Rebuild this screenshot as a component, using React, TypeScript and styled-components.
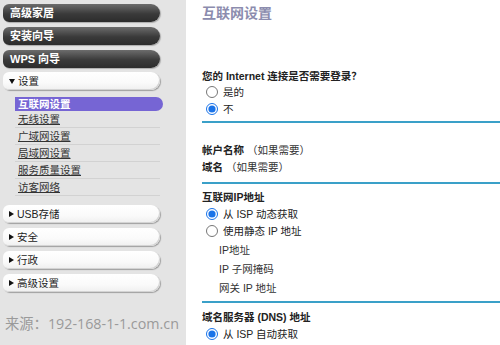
import React from "react";
import styled, { createGlobalStyle } from "styled-components";

const Global = createGlobalStyle`
  html, body { margin: 0; padding: 0; }
  body { width: 500px; height: 345px; overflow: hidden; background: #fff;
    font-family: "Liberation Sans", "Noto Sans CJK SC", sans-serif; }
`;

const Page = styled.div`
  display: flex;
  width: 500px;
  height: 345px;
  overflow: hidden;
`;

const Sidebar = styled.div`
  width: 186px;
  flex: none;
  background: #e4e4e4;
  padding: 4px 26px 0 3px;
  box-sizing: border-box;
  display: flex;
  flex-direction: column;
`;

const DarkBtn = styled.div`
  height: 18px;
  margin-bottom: 5px;
  border-radius: 6px 9px 9px 6px;
  background: linear-gradient(#6c6c6c, #3a3a3a 55%, #2c2c2c);
  box-shadow: 1px 1px 1px rgba(0,0,0,0.25);
  color: #fff;
  font-weight: bold;
  font-size: 11px;
  line-height: 18px;
  padding-left: 7px;
`;

const LightBtn = styled.div<{ $mt?: number }>`
  height: 18px;
  margin-top: ${(p) => p.$mt ?? 0}px;
  margin-bottom: 5px;
  border-radius: 6px 9px 9px 6px;
  background: linear-gradient(#ffffff, #fafafa 60%, #efefef);
  box-shadow: 1px 1px 1px rgba(0,0,0,0.3), inset -1px -1px 0 #d4d4d4;
  color: #222;
  font-size: 10.5px;
  line-height: 18px;
  padding-left: 6px;
  display: flex;
  align-items: center;
  gap: 3px;
`;

const Tri = styled.span<{ $down?: boolean }>`
  display: inline-block;
  width: 0;
  height: 0;
  ${(p) =>
    p.$down
      ? `border-left: 3px solid transparent; border-right: 3px solid transparent; border-top: 5px solid #111;`
      : `border-top: 3px solid transparent; border-bottom: 3px solid transparent; border-left: 5px solid #111;`}
`;

const SubList = styled.div`
  margin: 2px 0 9px 12px;
  display: flex;
  flex-direction: column;
`;

const Selected = styled.div`
  height: 14px;
  background: #7665d4;
  border-radius: 0 7px 7px 0;
  color: #fff;
  font-weight: bold;
  font-size: 10.5px;
  line-height: 14px;
  padding-left: 3px;
  margin-right: -3px;
`;

const SubItem = styled.div`
  height: 16px;
  border-bottom: 1px solid #d2d2d2;
  font-size: 10.5px;
  line-height: 17px;
  padding-left: 3px;
  color: #333;
  text-decoration: underline;
`;

const Footer = styled.div`
  margin-top: 15px;
  margin-left: 2px;
  font-family: "Open Sans", "Noto Sans CJK SC", sans-serif;
  font-size: 14.3px;
  color: #9a9a9a;
  white-space: nowrap;
`;

const Main = styled.div`
  flex: 1;
  padding: 2px 0 0 16px;
  font-size: 10.5px;
  color: #222;
`;

const Title = styled.div`
  font-size: 14px;
  font-weight: bold;
  color: #8c8cae;
  height: 20px;
  margin-bottom: 47px;
`;

const Question = styled.div`
  font-weight: bold;
  height: 14px;
  line-height: 14px;
`;

const RadioRow = styled.label`
  display: flex;
  align-items: center;
  height: 17px;
  padding-left: 4px;
  gap: 5px;
`;

const Radio = styled.input.attrs({ type: "radio" })`
  margin: 0;
  width: 12px;
  height: 12px;
  accent-color: #1a73e8;
`;

const Rule = styled.div<{ $mt: number; $mb: number }>`
  height: 2px;
  background: #3aa0c8;
  margin-top: ${(p) => p.$mt}px;
  margin-bottom: ${(p) => p.$mb}px;
`;

const Field = styled.div<{ $indent?: number; $h?: number; $mt?: number }>`
  height: ${(p) => p.$h ?? 17}px;
  line-height: ${(p) => p.$h ?? 17}px;
  padding-left: ${(p) => p.$indent ?? 0}px;
  margin-top: ${(p) => p.$mt ?? 0}px;
  color: #333;
`;

const Strong = styled.span`
  font-weight: bold;
  color: #222;
`;

const Bold = styled.div`
  font-weight: bold;
  height: 16px;
  line-height: 16px;
`;

export default function App() {
  return (
    <Page>
      <Global />
      <Sidebar>
        <DarkBtn>高级家居</DarkBtn>
        <DarkBtn>安装向导</DarkBtn>
        <DarkBtn>WPS 向导</DarkBtn>
        <LightBtn $mt={-1}>
          <Tri $down />
          设置
        </LightBtn>
        <SubList>
          <Selected>互联网设置</Selected>
          <SubItem>无线设置</SubItem>
          <SubItem>广域网设置</SubItem>
          <SubItem>局域网设置</SubItem>
          <SubItem>服务质量设置</SubItem>
          <SubItem>访客网络</SubItem>
        </SubList>
        <LightBtn>
          <Tri />
          USB存储
        </LightBtn>
        <LightBtn>
          <Tri />
          安全
        </LightBtn>
        <LightBtn>
          <Tri />
          行政
        </LightBtn>
        <LightBtn>
          <Tri />
          高级设置
        </LightBtn>
        <Footer>来源：192-168-1-1.com.cn</Footer>
      </Sidebar>
      <Main>
        <Title>互联网设置</Title>
        <Question>您的 Internet 连接是否需要登录？</Question>
        <RadioRow>
          <Radio name="login" />
          是的
        </RadioRow>
        <RadioRow>
          <Radio name="login" defaultChecked />
          不
        </RadioRow>
        <Rule $mt={4} $mb={19} />
        <Field>
          <Strong>帐户名称</Strong> （如果需要）
        </Field>
        <Field>
          <Strong>域名</Strong> （如果需要）
        </Field>
        <Rule $mt={6} $mb={5} />
        <Bold>互联网IP地址</Bold>
        <RadioRow>
          <Radio name="ip" defaultChecked />
          从 ISP 动态获取
        </RadioRow>
        <RadioRow>
          <Radio name="ip" />
          使用静态 IP 地址
        </RadioRow>
        <Field $indent={17} $h={19} $mt={2}>IP地址</Field>
        <Field $indent={17} $h={19}>IP 子网掩码</Field>
        <Field $indent={17} $h={19}>网关 IP 地址</Field>
        <Rule $mt={3} $mb={6} />
        <Bold>域名服务器 (DNS) 地址</Bold>
        <RadioRow>
          <Radio name="dns" defaultChecked />
          从 ISP 自动获取
        </RadioRow>
        <RadioRow>
          <Radio name="dns" />
          使用这些 DNS 服务器
        </RadioRow>
      </Main>
    </Page>
  );
}
